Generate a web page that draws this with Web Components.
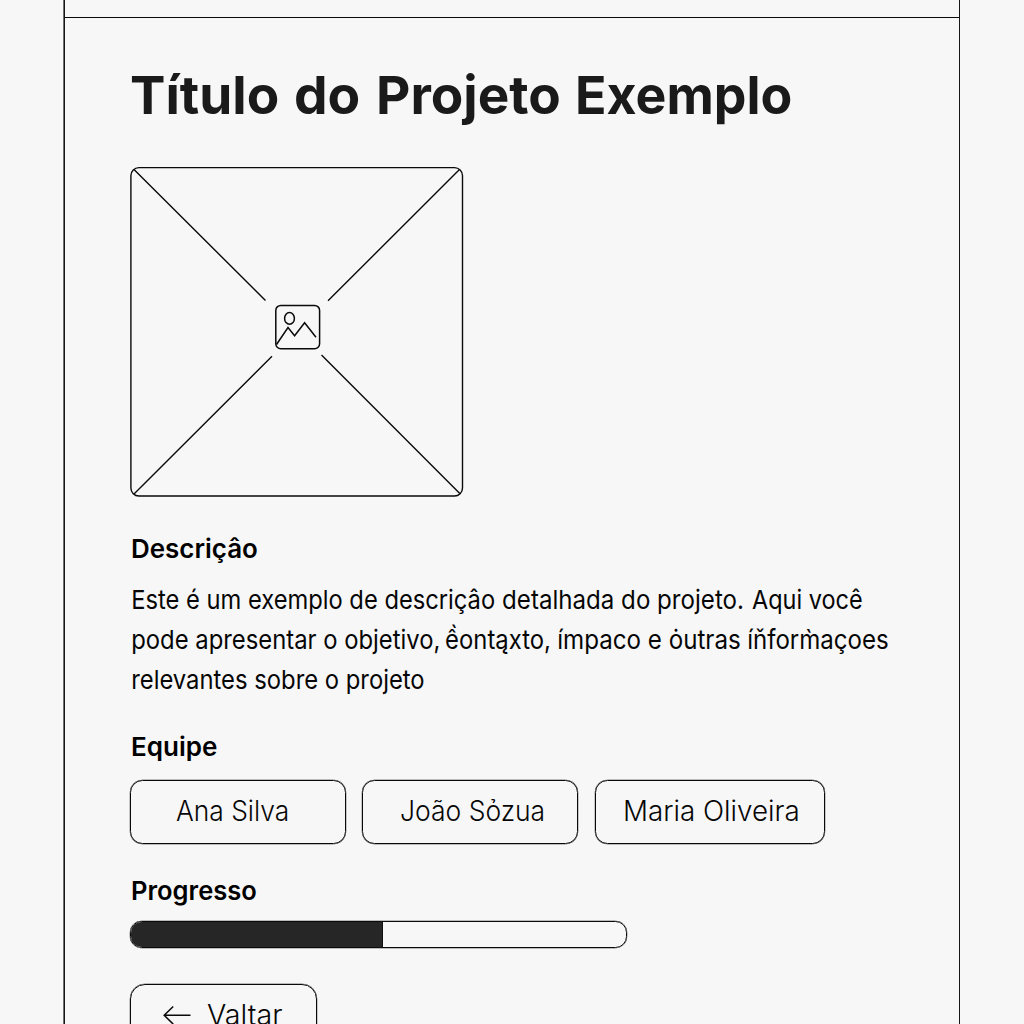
<!DOCTYPE html>
<html lang="pt"><head><meta charset="utf-8"><title>Projeto</title>
<style>html,body{margin:0;background:#f7f7f7;height:1024px;overflow:hidden}body{font-family:Inter,"Liberation Sans",sans-serif;color:#060606}</style></head>
<body><project-page></project-page>
<script>
const define=(name,html,ready)=>customElements.define(name,class extends HTMLElement{
  connectedCallback(){
    if(this.shadowRoot)return;
    this.attachShadow({mode:'open'}).innerHTML=html;
    if(ready)ready(this);
  }
});

/* Text stretched so that its ink is exactly `w` pixels wide. */
define('fit-text','<style>:host{display:block;white-space:pre;flex:none}span{display:inline-block;transform-origin:0 0}</style><span><slot></slot></span>',el=>{
  const cs=getComputedStyle(el),c=document.createElement('canvas').getContext('2d');
  c.font=`${cs.fontWeight} ${cs.fontSize} ${cs.fontFamily}`;
  const m=c.measureText(el.textContent),w=+el.getAttribute('w');
  const s=w/(m.actualBoundingBoxLeft+m.actualBoundingBoxRight);
  el.style.width=w+'px';
  el.shadowRoot.querySelector('span').style.transform=`translateX(${m.actualBoundingBoxLeft*s}px) scaleX(${s})`;
});

define('section-title','<style>:host{display:block;height:32px;padding-left:1.7px;font-size:26px;font-weight:600;line-height:34px;color:#000}</style><slot></slot>');

define('text-line','<style>:host{display:flex;height:40px;padding-left:2.5px;font-size:26.2px;font-weight:380;line-height:42px}</style><slot></slot>');

define('team-member',`<style>:host{display:block;box-sizing:border-box;height:64px;border:1px solid #0a0a0a;border-radius:12.5px;box-shadow:0 0 0 .2px #0a0a0a;
  font-size:27.8px;font-weight:360;line-height:61px}</style><slot></slot>`);

define('image-placeholder',`<style>:host{display:block;width:334px;height:331px}svg{display:block}</style>
<svg width="334" height="331" viewBox="130 166 334 331" fill="none" stroke="#0a0a0a" stroke-width="1.4">
<rect x="130.9" y="167.6" width="331.6" height="328.4" rx="8"/>
<path d="M134 169.5 265.5 300.5M459.5 169.5 328 300.8M134 494 272 356.3M459.8 493.5 321.5 355"/>
<rect x="275.8" y="305.4" width="43.8" height="43.4" rx="5" stroke-width="1.5"/>
<ellipse cx="289.5" cy="318.4" rx="4.9" ry="5.9" stroke-width="1.5"/>
<path d="M276.5 344.5 288 327.6 294.6 335.8 304.6 322.8 316 337.2" stroke-width="1.5"/></svg>`);

define('progress-bar',`<style>:host{display:block;box-sizing:border-box;width:497px;height:27px;border:1px solid #0a0a0a;border-radius:11.5px;overflow:hidden;box-shadow:0 0 0 .2px #0a0a0a}
  div{height:100%;background:#262626;border-right:1px solid #111;box-sizing:border-box}</style><div></div>`,
  el=>{el.shadowRoot.querySelector('div').style.width=el.getAttribute('value')+'%'});

define('back-button',`<style>:host{display:flex;box-sizing:border-box;width:187px;height:64px;border:1px solid #0a0a0a;border-radius:15px;box-shadow:0 0 0 .2px #0a0a0a;
  padding-left:32px;font-size:28px;font-weight:360;line-height:61px}svg{flex:none;margin:20px 16px 0 0}</style>
<svg width="28" height="22" viewBox="0 0 28 22" fill="none" stroke="#0a0a0a" stroke-width="1.5"><path d="M27.5 10.3H1.2M10.2 1.5 1.2 10.3 10.2 19.1"/></svg><slot></slot>`);

define('project-page',`<style>
:host{display:flex;justify-content:flex-start;padding-left:64px}
main{width:896px;height:1024px;border-left:1px solid #161616;border-right:1px solid #161616;box-shadow:-.6px 0 0 #161616;box-sizing:border-box;flex:none}
header{height:18px;border-bottom:1px solid #0a0a0a;box-sizing:border-box}
article{display:flex;flex-direction:column;align-items:flex-start;padding:45px 0 0 65px}
h1{display:flex;margin:0;padding-left:1px;font-size:52.7px;font-weight:660;line-height:65px;height:64px;color:#1a1a1a}
image-placeholder{margin:39px 0 35px}
.text{margin:15px 0 31px}
.team{display:flex;margin:18px 0 30px}
progress-bar{margin:15px 0 36px}
</style>
<main><header></header><article>
<h1><fit-text w="147">Título</fit-text> <fit-text w="63" style="margin-left:18px">do</fit-text> <fit-text w="180.5" style="margin-left:19.5px">Projeto</fit-text> <fit-text w="213" style="margin-left:18.5px">Exemplo</fit-text></h1>
<image-placeholder></image-placeholder>
<section-title><fit-text w="125">Descriçâo</fit-text></section-title>
<div class="text">
<text-line><fit-text w="361.5">Este é um exemplo de descriçâo</fit-text><fit-text w="239.5" style="margin-left:9px">detalhada do projeto.</fit-text><fit-text w="109.5" style="margin-left:9px">Aqui você</fit-text></text-line>
<text-line><fit-text w="306">pode apresentar o objetivo,</fit-text><fit-text w="103.5" style="margin-left:7.5px">ềontąxto,</fit-text><fit-text w="181" style="margin-left:9px">ímpaco e ȯutras</fit-text><fit-text w="139" style="margin-left:9.5px">íňform&#x300;açoes</fit-text></text-line>
<text-line><fit-text w="291">relevantes sobre o projeto</fit-text></text-line>
</div>
<section-title><fit-text w="85">Equipe</fit-text></section-title>
<div class="team">
<team-member style="width:216px;padding-left:44.5px"><fit-text w="111">Ana Silva</fit-text></team-member>
<team-member style="width:216px;margin-left:16px;padding-left:37.5px"><fit-text w="142">João Sỏzua</fit-text></team-member>
<team-member style="width:230px;margin-left:17px;padding-left:28.5px"><fit-text w="172.5">Maria Oliveira</fit-text></team-member>
</div>
<section-title><fit-text w="124">Progresso</fit-text></section-title>
<progress-bar value="51"></progress-bar>
<back-button><fit-text w="75.5">Valtar</fit-text></back-button>
</article></main>`);
</script></body></html>
